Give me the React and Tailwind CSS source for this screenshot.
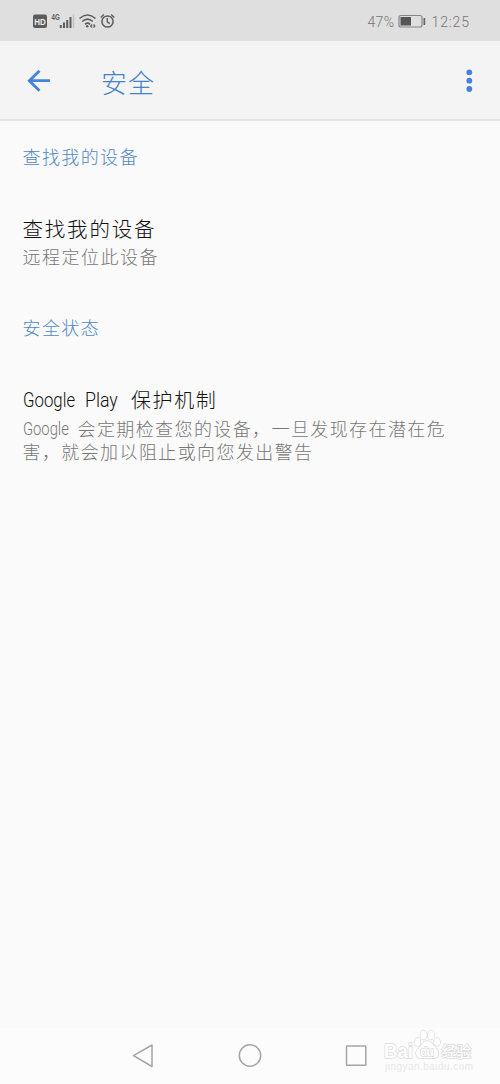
const latin = "font-[Roboto,'Liberation_Sans',sans-serif]";

function StatusBar() {
  return (
    <div className="h-[41px] bg-[#dfdfdf] flex items-center justify-between pl-8 pr-[31px] shrink-0">
      <svg width="84" height="20" viewBox="32 11 84 20" fill="none" stroke="#5c5c5c">
        {/* HD */}
        <rect x="33" y="14.500" width="14" height="13.500" rx="2" fill="#5c5c5c" stroke="none" />
        <text x="34.3" y="24.5" fontSize="9" fontWeight="700" fontFamily="Liberation Sans" fill="#eee" stroke="none" textLength="11.5" lengthAdjust="spacingAndGlyphs">HD</text>
        {/* Signal */}
        <text x="51.5" y="20" fontSize="8.500" fontWeight="700" fontFamily="Liberation Sans" fill="#5c5c5c" stroke="none" textLength="8.300" lengthAdjust="spacingAndGlyphs">4G</text>
        <path d="M60.8 28v-3M64 28v-5.500M67.200 28v-8M70.500 28v-11" strokeWidth="2" />
        <path d="M73.500 28V14.500" stroke="#c2c2c2" strokeWidth="1.500" />
        {/* Wifi */}
        <path d="M79.500 18.500q8-7 16 0M82.200 21.500q5.300-4.600 10.600 0M85 24.300q2.700-2.200 5 0" strokeWidth="1.600" />
        <circle cx="87.200" cy="26.300" r="1.300" fill="#5c5c5c" stroke="none" />
        <path d="M92 24.500l-1.300 1.500 1.300 1.500M93.500 24.500l1.300 1.500-1.300 1.500" strokeWidth="1.200" />
        {/* Alarm */}
        <circle cx="107.500" cy="21.500" r="5.600" strokeWidth="1.500" />
        <path d="M107.300 18v4l2.500 1.700M100.800 17.500l3-3M114.200 17.500l-3-3" strokeWidth="1.400" />
      </svg>
      <svg width="102" height="20" viewBox="367 11 102 20" fill="#747474">
        <text x="367.500" y="27" fontSize="14" fontFamily="Roboto" fontWeight="300" textLength="26.500">47%</text>
        <rect x="399" y="15.500" width="23" height="11.500" rx="2" fill="none" stroke="#858585" strokeWidth="1.200" />
        <rect x="400.500" y="17" width="10.500" height="8.500" fill="#555" />
        <rect x="423.500" y="18" width="1.700" height="7" fill="#666" />
        <text x="431.500" y="27" fontSize="14" fontFamily="Roboto" fontWeight="300" textLength="37.500">12:25</text>
      </svg>
    </div>
  );
}

function Header() {
  return (
    <header className="h-20 bg-[#f4f4f4] border-b-2 border-[#e4e4e4] flex items-center shrink-0">
      <svg className="ml-[27px] mt-[2px]" width="24" height="24" viewBox="0 0 24 24" fill="none" stroke="#4382df" strokeWidth="2.800">
        <path d="M23 11.700H2.500M12.500 1.700L2.300 11.700l10.200 10" />
      </svg>
      <h1 className="ml-[50px] mt-1 text-[26px] leading-8 tracking-[1px] font-light text-[#4382cc]">安全</h1>
      <svg className="ml-auto mr-[27px] mt-[2px]" width="8" height="24" viewBox="0 0 8 24" fill="#4382df">
        <circle cx="4.300" cy="3.300" r="2.900" />
        <circle cx="4.300" cy="11.700" r="2.900" />
        <circle cx="4.300" cy="20" r="2.900" />
      </svg>
    </header>
  );
}

function SectionTitle({ children }) {
  return <h2 className="text-[18px] leading-6 tracking-[1.4px] font-light text-[#4f87c5]">{children}</h2>;
}

function Watermark() {
  return (
    <svg className="absolute left-[382px] top-[1026px]" width="94" height="48" viewBox="382 1026 94 48" fill="#fff" stroke="#d9d9d9" strokeWidth="1.400" paintOrder="stroke" strokeLinejoin="round">
      <text x="384" y="1058" fontSize="21" fontWeight="700" fontFamily="Liberation Sans" textLength="29" lengthAdjust="spacingAndGlyphs">Bai</text>
      <ellipse cx="417.500" cy="1042" rx="3" ry="4" />
      <ellipse cx="423.500" cy="1035" rx="3.200" ry="4.500" />
      <ellipse cx="431" cy="1035" rx="3.200" ry="4.500" />
      <ellipse cx="437" cy="1042" rx="3" ry="4" />
      <path d="M427 1041c-4 0-5 4-8 7-5 4-3 10 2 10h13c5 0 6-6 2-10-3-3-5-7-9-7z" />
      <text x="420" y="1055.500" fontSize="12.500" fontWeight="700" fontFamily="Liberation Sans" textLength="14">du</text>
      <text x="441.500" y="1056.500" fontSize="15" fontWeight="500" fontFamily="Noto Sans CJK SC" textLength="30">经验</text>
      <text x="385" y="1069.500" fontSize="10" fontFamily="Liberation Sans" fill="#e8e8e8" stroke="none" textLength="88">jingyan.baidu.com</text>
    </svg>
  );
}

function NavBar() {
  return (
    <nav className="h-[56px] mt-auto bg-[#fcfcfc] flex items-center justify-center shrink-0">
      <svg width="240" height="28" viewBox="130 1042 240 28" fill="none" stroke="#a5a5a5" strokeWidth="1.500" strokeLinejoin="round">
        <path d="M133.500 1055.700L152 1045v21.500z" />
        <circle cx="250" cy="1055.500" r="10.700" />
        <rect x="346.500" y="1046" width="19.300" height="19.300" rx="0.500" />
      </svg>
    </nav>
  );
}

export default function App() {
  return (
    <div lang="zh-CN" className="relative w-[500px] h-[1084px] bg-[#fafafa] flex flex-col overflow-hidden font-['Noto_Sans_CJK_SC',sans-serif]">
      <StatusBar />
      <Header />
      <main className="pl-[22.5px] pt-[23px]">
        <SectionTitle>查找我的设备</SectionTitle>
        <div className="mt-[45px]">
          <h3 className="text-[20.5px] leading-[30px] tracking-[1.8px] font-light text-[#111]">查找我的设备</h3>
          <p className="text-[18px] leading-[26px] tracking-[1.5px] font-light text-[#777]">远程定位此设备</p>
        </div>
        <div className="mt-[46px]">
          <SectionTitle>安全状态</SectionTitle>
        </div>
        <div className="mt-[46px]">
          <h3 className="flex text-[20px] leading-[30px] tracking-[1.6px] font-light text-[#111]">
            <span className={`${latin} w-[62.5px] shrink-0 tracking-normal`}>
              <span className="inline-block origin-left scale-x-[.84]">Google</span>
            </span>
            <span className={`${latin} w-[46px] shrink-0 tracking-normal`}>
              <span className="inline-block origin-left scale-x-[.89]">Play</span>
            </span>
            <span>保护机制</span>
          </h3>
          <div className="text-[18px] leading-[23px] tracking-[1.4px] font-light text-[#777]">
            <p className="flex whitespace-nowrap pt-[2px]">
              <span className={`${latin} w-[55px] shrink-0 tracking-normal`}>
                <span className="inline-block origin-left scale-x-[.82]">Google</span>
              </span>
              <span>会定期检查您的设备，一旦发现存在潜在危</span>
            </p>
            <p>害，就会加以阻止或向您发出警告</p>
          </div>
        </div>
      </main>
      <NavBar />
      <Watermark />
    </div>
  );
}
